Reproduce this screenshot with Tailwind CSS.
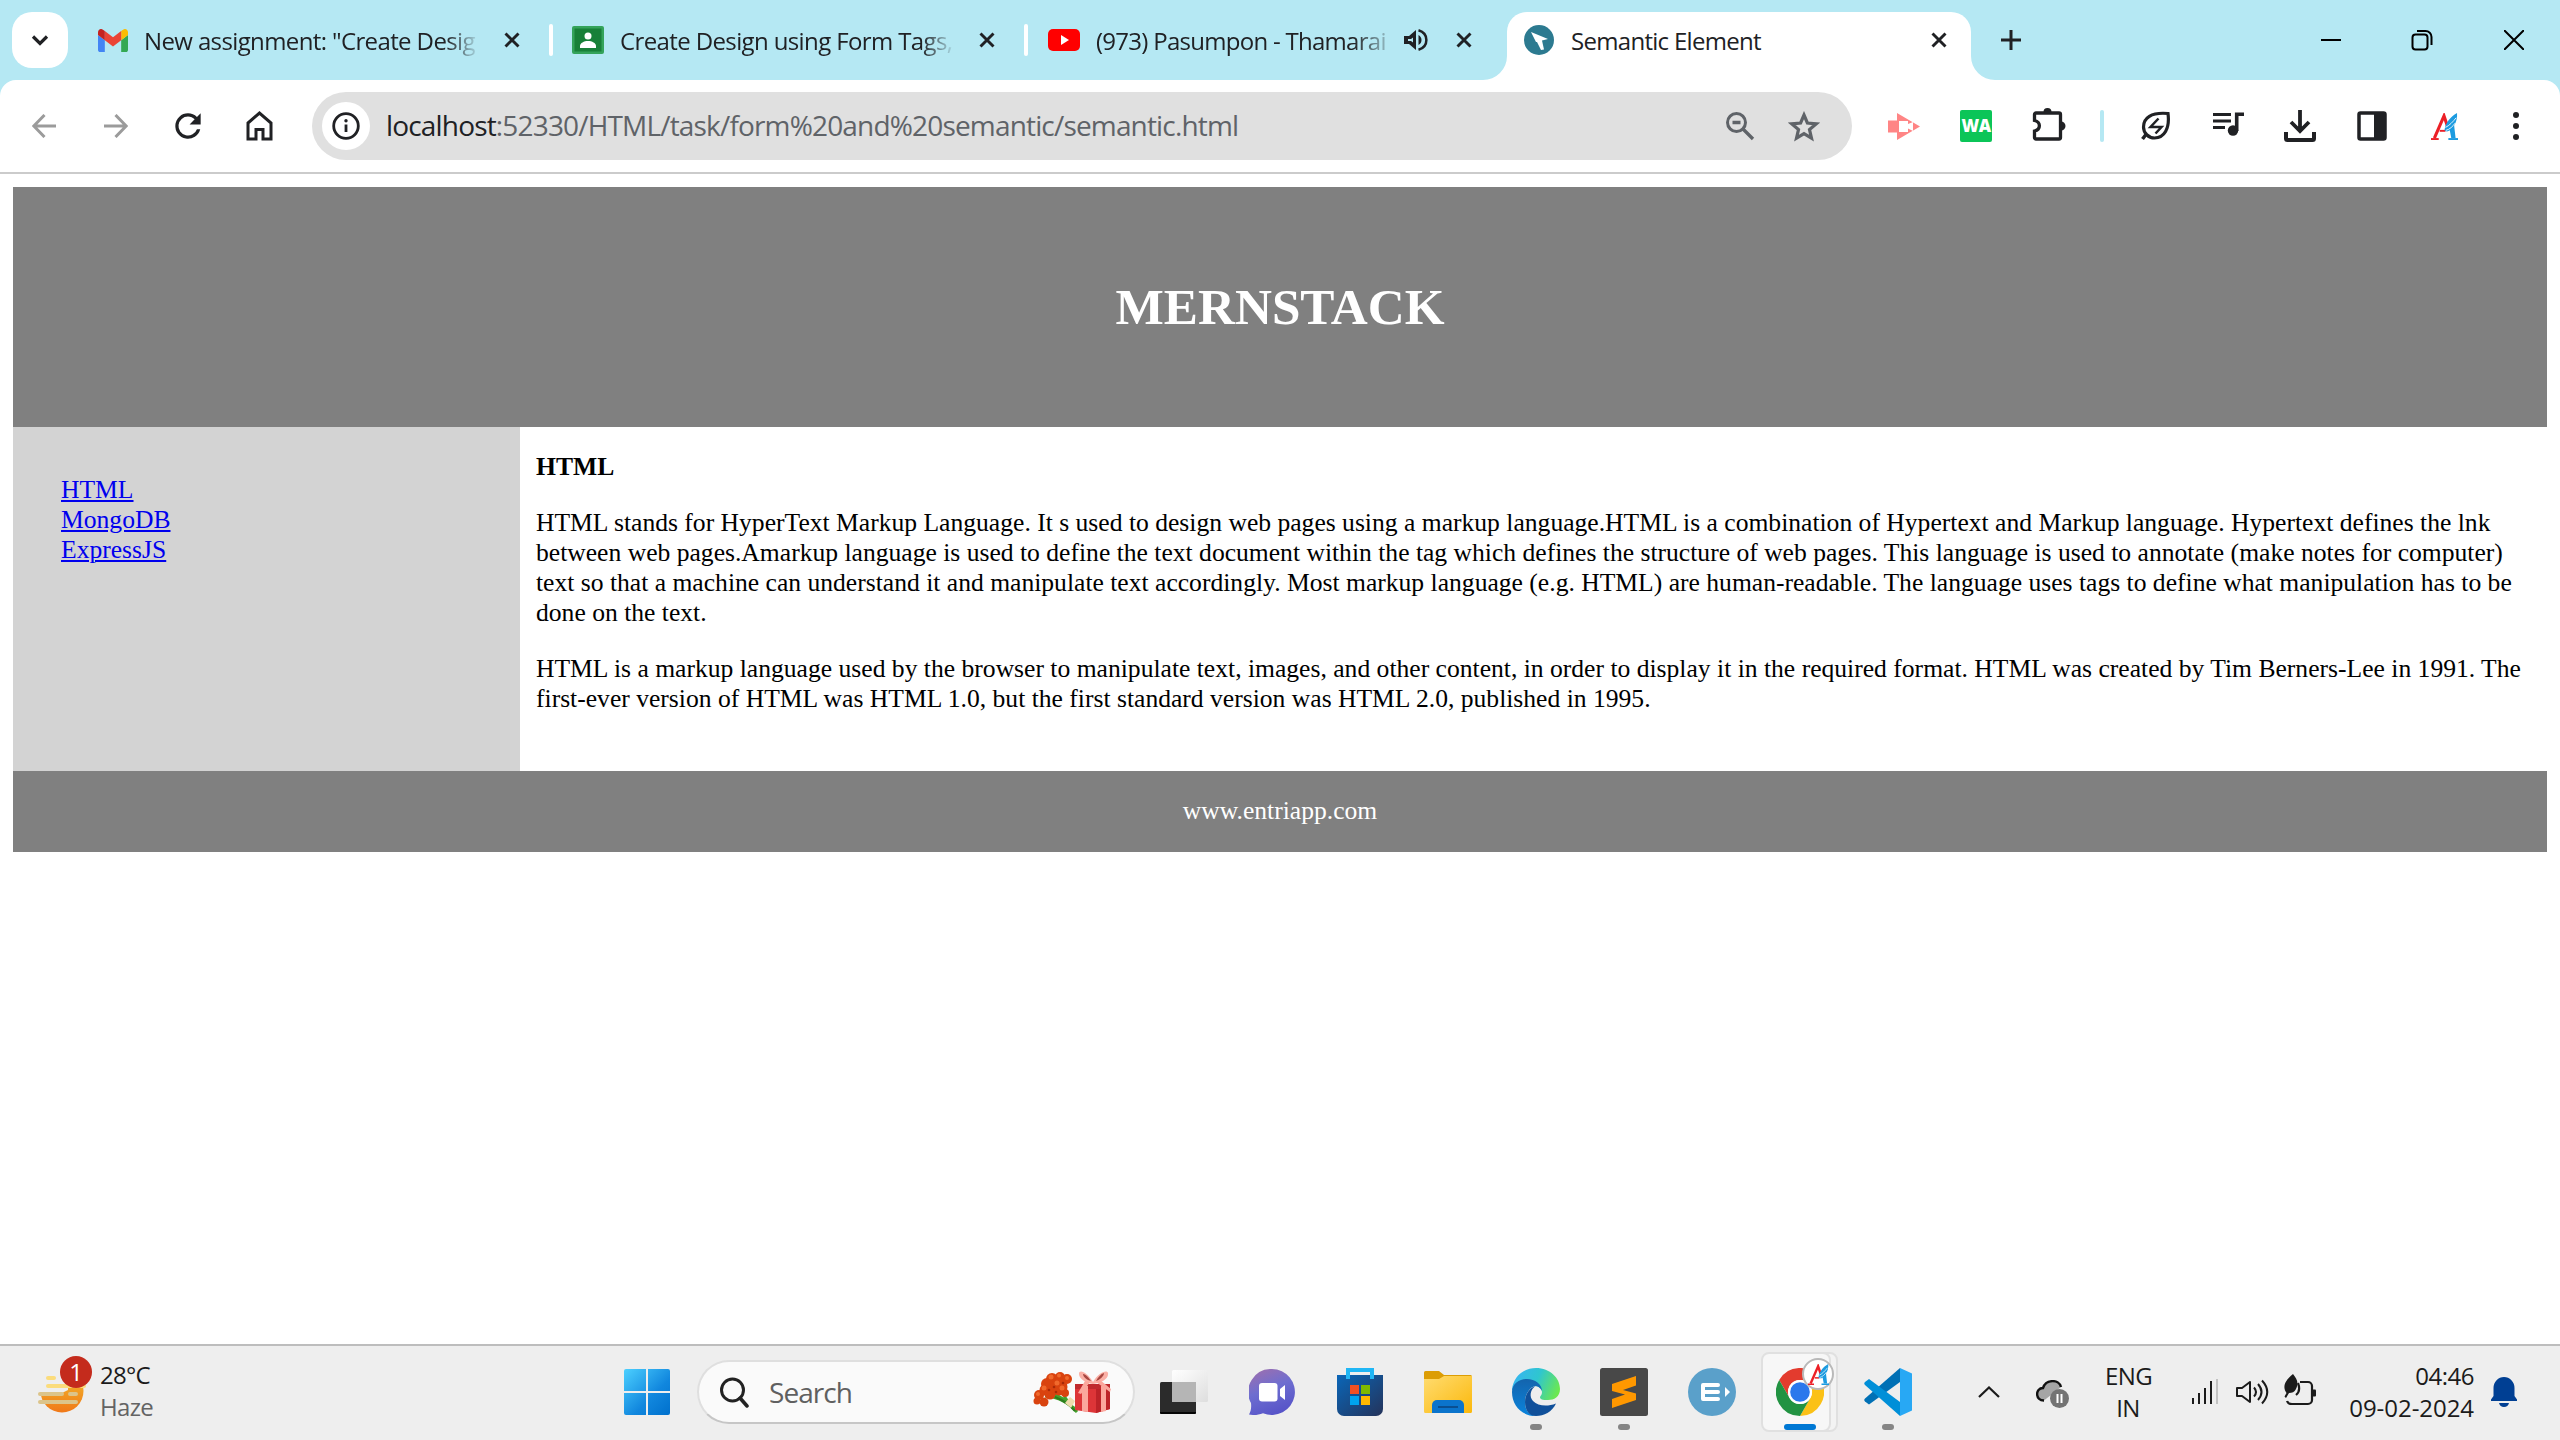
<!DOCTYPE html>
<html lang="en">
<head>
<meta charset="utf-8">
<title>Semantic Element</title>
<script src="https://cdn.jsdelivr.net/npm/@tailwindcss/browser@4"></script>
</head>
<body class="flex h-[1440px] w-[2560px] flex-col overflow-hidden bg-white font-['Open_Sans',sans-serif] text-[#202124]">
<svg class="hidden">
  <symbol id="x" viewBox="0 0 20 20"><path d="M3.500 3.500l13 13M16.500 3.500l-13 13" stroke="#202124" stroke-width="2.900"/></symbol>
  <symbol id="aeon" viewBox="0 0 28 28">
    <path d="M3.500 26L13.500 3l4 12" fill="none" stroke="#ec2027" stroke-width="3.200"/>
    <path d="M9 18.500h6" stroke="#ec2027" stroke-width="2"/>
    <path d="M14 18C15 10 20 4 27 0c.5 5-1 10-3 13l1.500 13h-4.500l-1.500-8c-2 1.500-4 1.500-5.500 0z" fill="#1b9be0"/>
    <path d="M15 15c4-2 8-6 11-10M15.500 18c4-1 7-4 9.500-7.500" stroke="#fff" stroke-width=".9" fill="none"/>
    <path d="M0 27h8" stroke="#ec2027" stroke-width="2"/><path d="M18 27h10" stroke="#1b9be0" stroke-width="2"/>
  </symbol>
</svg>

<!-- tab strip -->
<div class="flex h-20 shrink-0 items-center bg-[#b5e8f3] text-2xl leading-8 tracking-[-0.62px]">
  <div class="ml-3 flex h-14 w-14 items-center justify-center rounded-[20px] bg-white">
    <svg class="h-5 w-5" viewBox="0 0 20 20"><path d="M3 6.500l7 7 7-7" fill="none" stroke="#202124" stroke-width="3.200"/></svg>
  </div>
  <svg class="ml-[30px] h-[23px] w-[30px]" viewBox="52 42 88 66" preserveAspectRatio="none"><path fill="#4285f4" d="M58 108h14V74L52 59v43c0 3.320 2.690 6 6 6"/><path fill="#34a853" d="M120 108h14c3.320 0 6-2.690 6-6V59l-20 15"/><path fill="#fbbc04" d="M120 48v26l20-15v-8c0-7.420-8.470-11.650-14.400-7.200"/><path fill="#ea4335" d="M72 74V48l24 18 24-18v26L96 92"/><path fill="#c5221f" d="M52 51v8l20 15V48l-5.600-4.200c-5.940-4.450-14.400-.22-14.400 7.200"/></svg>
  <div class="ml-4 w-[336px] overflow-hidden pt-0.5 whitespace-nowrap [mask-image:linear-gradient(to_right,black_90%,transparent)]">New assignment: "Create Desig</div>
  <svg class="ml-[22px] h-5 w-5"><use href="#x"/></svg>
  <div class="ml-[27px] h-8 w-1 rounded-full bg-white"></div>
  <svg class="ml-[19px] h-7 w-8" viewBox="0 0 32 28"><rect width="32" height="28" rx="2" fill="#34a35a"/><rect x="2.500" y="2.500" width="27" height="23" fill="#188038"/><circle cx="16" cy="10" r="3.500" fill="#fff"/><path d="M8 22v-2c0-3 4-5 8-5s8 2 8 5v2z" fill="#fff"/></svg>
  <div class="ml-4 w-[335px] overflow-hidden pt-0.5 whitespace-nowrap [mask-image:linear-gradient(to_right,black_90%,transparent)]">Create Design using Form Tags,</div>
  <svg class="ml-[22px] h-5 w-5"><use href="#x"/></svg>
  <div class="ml-[27px] h-8 w-1 rounded-full bg-white"></div>
  <svg class="ml-5 h-[22px] w-8" viewBox="0 0 32 22"><rect width="32" height="22" rx="5" fill="#f00"/><path d="M13 6l8 5-8 5z" fill="#fff"/></svg>
  <div class="ml-4 w-[292px] overflow-hidden pt-0.5 tracking-[-0.72px] whitespace-nowrap [mask-image:linear-gradient(to_right,black_88%,transparent_103%)]">(973) Pasumpon - Thamarai</div>
  <svg class="ml-4 h-6 w-6" viewBox="0 0 24 24"><path d="M0 8v8h5l7 6V2L5 8z" fill="#202124"/><path d="M4 11h3l2-1.500v5L7 13H4z" fill="#b5e8f3"/><path d="M14.500 7c4 2 4 8 0 10z" fill="#202124"/><path d="M14.500 2.200c10.500 3 10.500 16.600 0 19.600" fill="none" stroke="#202124" stroke-width="2.500"/></svg>
  <svg class="ml-[26px] h-5 w-5"><use href="#x"/></svg>
  <div class="relative ml-[33px] flex h-[68px] w-[464px] items-center self-end rounded-t-[20px] bg-white pb-3">
    <svg class="absolute bottom-0 -left-6 h-6 w-6" viewBox="0 0 24 24"><path d="M24 0v24H0A24 24 0 0 0 24 0z" fill="#fff"/></svg>
    <svg class="absolute -right-6 bottom-0 h-6 w-6" viewBox="0 0 24 24"><path d="M0 0v24h24A24 24 0 0 1 0 0z" fill="#fff"/></svg>
    <svg class="ml-[17px] h-[30px] w-[30px]" viewBox="0 0 30 30"><circle cx="15" cy="15" r="15" fill="#2c7a90"/><path d="M7 7l17 7-6 1.500 2 9-3 .5-4-8-1 0z" fill="#fff"/></svg>
    <span class="ml-[17px] pt-0.5 tracking-[-0.7px]">Semantic Element</span>
    <svg class="mr-[22px] ml-auto h-5 w-5"><use href="#x"/></svg>
  </div>
  <svg class="ml-[30px] h-5 w-5" viewBox="0 0 20 20"><path d="M10 0v20M0 10h20" stroke="#202124" stroke-width="3"/></svg>
  <svg class="mr-[70px] ml-auto h-[22px] w-5" viewBox="0 0 20 22"><path d="M0 11h20" stroke="#000" stroke-width="2"/></svg>
  <svg class="mr-[71px] h-[22px] w-[22px]" viewBox="0 0 22 22"><rect x="1.500" y="5.500" width="15" height="15" rx="3" fill="none" stroke="#000" stroke-width="2"/><path d="M6 2h8.500a6 6 0 0 1 6 6v8" fill="none" stroke="#000" stroke-width="2"/></svg>
  <svg class="mr-9 h-5 w-5" viewBox="0 0 20 20"><path d="M0 0l20 20M20 0L0 20" stroke="#000" stroke-width="2"/></svg>
</div>

<!-- toolbar -->
<div class="shrink-0 bg-[#b5e8f3]">
<div class="flex h-[94px] items-center rounded-t-2xl border-b-2 border-[#cbcbcb] bg-white pl-2">
  <div class="flex w-[72px] justify-center"><svg class="h-6 w-6" viewBox="0 0 24 24"><path d="M24 12H2M12.500 1L1.800 12l10.700 11" fill="none" stroke="#9b9b9b" stroke-width="3"/></svg></div>
  <div class="flex w-[72px] justify-center"><svg class="h-6 w-6" viewBox="0 0 24 24"><path d="M0 12h22M11.500 1l10.700 11-10.700 11" fill="none" stroke="#9b9b9b" stroke-width="3"/></svg></div>
  <div class="flex w-[72px] justify-center"><svg class="h-[38px] w-[38px]" viewBox="0 0 24 24"><path d="M17.650 6.350A7.960 7.960 0 0 0 12 4a8 8 0 1 0 7.730 10h-2.080A6 6 0 1 1 12 6c1.660 0 3.140.69 4.220 1.780L13 11h7V4z" fill="#202124"/></svg></div>
  <div class="flex w-[72px] justify-center"><svg class="mr-px h-[30px] w-[27px]" viewBox="0 0 27 30"><path d="M2 12L13.500 2 25 12v16h-8v-9.500h-7V28H2z" fill="none" stroke="#202124" stroke-width="3"/></svg></div>
  <div class="ml-4 flex h-[68px] w-[1540px] items-center rounded-full bg-[#e0e0e0] pl-2.5">
    <div class="flex h-12 w-12 items-center justify-center rounded-full bg-white"><svg class="h-7 w-7" viewBox="0 0 28 28"><circle cx="14" cy="14" r="12.300" fill="none" stroke="#202124" stroke-width="2.800"/><path d="M14 12.500V20" stroke="#202124" stroke-width="2.800"/><circle cx="14" cy="8.800" r="1.700" fill="#202124"/></svg></div>
    <div class="ml-4 pb-0.5 text-[28px] leading-9 tracking-[-0.83px] whitespace-nowrap text-[#5f6368]"><span class="text-[#202124]">localhost</span>:52330/HTML/task/form%20and%20semantic/semantic.html</div>
    <svg class="ml-auto h-[30px] w-[30px]" viewBox="0 0 30 30"><circle cx="11.500" cy="11.500" r="9" fill="none" stroke="#5f6368" stroke-width="3"/><path d="M7.500 11.500h8M18 18l10 10" stroke="#5f6368" stroke-width="3.300" fill="none"/></svg>
    <svg class="mr-8 ml-[33px] h-[31px] w-8" viewBox="0 0 32 31"><path d="M16 4l3.400 8 8.800.8-6.700 5.800 2 8.600L16 22.600l-7.500 4.600 2-8.600-6.700-5.800 8.800-.8z" fill="none" stroke="#5f6368" stroke-width="3.200"/></svg>
  </div>
  <div class="ml-4 flex w-[72px] justify-center"><svg class="h-[27px] w-8" viewBox="0 0 32 27"><path d="M0 7.500h9V0l23 13.500L9 27v-7.500H0z" fill="#ff8585"/><path d="M11 8h9v3l5-2v9l-5-2.500V19h-9z" fill="#fff"/></svg></div>
  <div class="flex w-[72px] justify-center"><div class="flex h-8 w-8 items-center justify-center rounded-xs bg-[#0bc558] pb-px text-[17px] font-extrabold tracking-[-0.5px] text-white">WA</div></div>
  <div class="flex w-[72px] justify-center"><svg class="mb-1 ml-0.5 h-[34px] w-[34px]" viewBox="0 0 34 34"><path d="M4 6h23a1.500 1.500 0 0 1 1.500 1.500v23A1.500 1.500 0 0 1 27 32H4a1.500 1.500 0 0 1-1.500-1.500v-6.500c6.500-1.500 6.500-9 0-10.500V7.500A1.500 1.500 0 0 1 4 6z" fill="none" stroke="#202124" stroke-width="3.300"/><path d="M11.500 5a4 4 0 0 1 8 0zM29 14.500a4.500 4.500 0 0 1 0 9z" fill="#202124"/></svg></div>
  <div class="flex w-9 justify-center"><div class="h-8 w-1 rounded-full bg-[#b5e8f3]"></div></div>
  <div class="flex w-[72px] justify-center"><svg class="h-[30px] w-[30px]" viewBox="0 0 30 30"><path d="M27 2.500C10 1 2.500 7 2.500 16c0 6 5 11 11 11C23 27 29 18 27 2.500z" fill="none" stroke="#202124" stroke-width="3.200"/><path d="M5 23.500L1.500 28" stroke="#202124" stroke-width="3.500"/><path d="M17.500 7.500l-8 8.500h11l-6 6.500" fill="none" stroke="#202124" stroke-width="2.500"/></svg></div>
  <div class="flex w-[72px] justify-center"><svg class="mb-1 ml-0.5 h-6 w-8" viewBox="0 0 32 24"><path d="M0 2.500h18M0 9h18M0 15.500h12" stroke="#202124" stroke-width="3.200"/><circle cx="20" cy="18.500" r="5.200" fill="#202124"/><path d="M23.700 19V2.300H31" fill="none" stroke="#202124" stroke-width="3.600"/></svg></div>
  <div class="flex w-[72px] justify-center"><svg class="h-8 w-8" viewBox="0 0 32 32"><path d="M16 0v21M7 12l9 9 9-9" fill="none" stroke="#202124" stroke-width="3.800"/><path d="M2 22v6.500a1.500 1.500 0 0 0 1.500 1.500h25a1.500 1.500 0 0 0 1.500-1.500V22" fill="none" stroke="#202124" stroke-width="4"/></svg></div>
  <div class="flex w-[72px] justify-center"><svg class="h-[30px] w-[30px]" viewBox="0 0 30 30"><rect x="2" y="2" width="26" height="26" rx="1.500" fill="none" stroke="#202124" stroke-width="3.500"/><path d="M17 2h11v26H17z" fill="#202124"/></svg></div>
  <div class="flex w-[72px] justify-center"><svg class="h-[27px] w-[27px]"><use href="#aeon"/></svg></div>
  <div class="flex w-[72px] flex-col items-center gap-[5px]"><div class="h-1.5 w-1.5 rounded-full bg-[#202124]"></div><div class="h-1.5 w-1.5 rounded-full bg-[#202124]"></div><div class="h-1.5 w-1.5 rounded-full bg-[#202124]"></div></div>
</div>
</div>

<!-- page -->
<main class="flex-1 bg-white px-[13px] pt-[13px] font-['Liberation_Serif',serif] text-[25.6px] leading-[30px] text-black">
  <header class="flex h-60 items-center justify-center bg-[#808080] pb-0.5 text-[51.2px] leading-[59px] font-bold text-white"><h1>MERNSTACK</h1></header>
  <div class="flex h-[344px]">
    <nav class="flex w-[507px] flex-col items-start bg-[#d3d3d3] p-12 text-[#0000ee]">
      <a class="underline decoration-2 underline-offset-2">HTML</a>
      <a class="underline decoration-2 underline-offset-2">MongoDB</a>
      <a class="underline decoration-2 underline-offset-2">ExpressJS</a>
    </nav>
    <section class="flex-1 pt-[25px] pl-4 whitespace-nowrap">
      <h4 class="font-bold">HTML</h4>
      <p class="mt-[25.6px]">HTML stands for HyperText Markup Language. It s used to design web pages using a markup language.HTML is a combination of Hypertext and Markup language. Hypertext defines the lnk<br>between web pages.Amarkup language is used to define the text document within the tag which defines the structure of web pages. This language is used to annotate (make notes for computer)<br>text so that a machine can understand it and manipulate text accordingly. Most markup language (e.g. HTML) are human-readable. The language uses tags to define what manipulation has to be<br>done on the text.</p>
      <p class="mt-[26.4px]">HTML is a markup language used by the browser to manipulate text, images, and other content, in order to display it in the required format. HTML was created by Tim Berners-Lee in 1991. The<br>first-ever version of HTML was HTML 1.0, but the first standard version was HTML 2.0, published in 1995.</p>
    </section>
  </div>
  <footer class="flex h-[81px] items-center justify-center bg-[#808080] pb-0.5 text-white">www.entriapp.com</footer>
</main>

<!-- taskbar -->
<footer class="flex h-24 shrink-0 items-center border-t-2 border-[#bdbdbd] bg-[#eeeeee] pb-0.5 text-2xl leading-8 text-[#1b1b1b]">
  <div class="relative ml-[38px] h-12 w-12">
    <svg class="h-12 w-12" viewBox="0 0 48 48"><defs><linearGradient id="sun" x2="0" y2="1"><stop stop-color="#f2c230"/><stop offset="1" stop-color="#f07818"/></linearGradient></defs><circle cx="24" cy="23" r="21.500" fill="url(#sun)"/><path d="M0 0h30v22l-8 4H0z" fill="#eee"/><g stroke-linecap="round" stroke-width="4"><path d="M10 10h6M10 18h36" stroke="#fbdc7c"/><path d="M2 26h22M32 26h6M2 34h36" stroke="#dcc48a"/></g></svg>
    <div class="absolute -top-3 left-[22px] flex h-8 w-8 items-center justify-center rounded-full bg-[#c42b1c] text-white">1</div>
  </div>
  <div class="mb-0.5 ml-[14px] w-[54px] tracking-[-0.7px]"><div>28°C</div><div class="text-[#636363]">Haze</div></div>
  <svg class="ml-[470px] h-[46px] w-[46px]" viewBox="0 0 46 46"><defs><linearGradient id="win" x2="1" y2="1"><stop stop-color="#4cd0ff"/><stop offset=".6" stop-color="#1187de"/><stop offset="1" stop-color="#0070cc"/></linearGradient></defs><path d="M2 0h20v22H0V2a2 2 0 0 1 2-2zM24 0h20a2 2 0 0 1 2 2v20H24zM0 24h22v22H2a2 2 0 0 1-2-2zM24 24h22v20a2 2 0 0 1-2 2H24z" fill="url(#win)"/></svg>
  <div class="ml-[27px] flex h-16 w-[438px] items-center rounded-full border-2 border-[#dfdfdf] border-b-[#c6c6c6] bg-[#fafafa] text-[28px] tracking-[-0.95px] text-[#606060]">
    <svg class="ml-5 h-8 w-8" viewBox="0 0 32 32"><circle cx="13.500" cy="14" r="11" fill="none" stroke="#222" stroke-width="3"/><path d="M21 22l7 8" stroke="#222" stroke-width="3.500" stroke-linecap="round"/></svg>
    <span class="ml-[18px]">Search</span>
    <!-- bouquet and gift -->
    <svg class="mr-5 ml-auto h-11 w-[80px]" viewBox="0 0 80 44">
      <g fill="none" stroke="#43a12c" stroke-width="3"><path d="M12 26c10 0 18 4 32 14M18 24c10 2 18 8 26 18M30 22c2 8 8 14 14 20"/><path d="M22 27c8 3 14 7 20 14" stroke="#2c7d1f" stroke-width="2"/></g>
      <path d="M32 33l5-6 5 4-4 7z" fill="#efdcae"/>
      <g fill="#d9430f"><circle cx="6" cy="25" r="5"/><circle cx="11" cy="32" r="4.500"/><circle cx="4" cy="31" r="3.500"/><circle cx="12" cy="20" r="5.500"/><circle cx="19" cy="9" r="6"/><circle cx="27" cy="7" r="5"/><circle cx="34" cy="9" r="5"/><circle cx="26" cy="17" r="8.500"/><circle cx="17" cy="24" r="5.500"/><circle cx="32" cy="23" r="4"/><circle cx="14" cy="14" r="6"/></g>
      <g fill="#f0692c"><circle cx="18" cy="7" r="2.500"/><circle cx="26" cy="5.500" r="2"/><circle cx="24" cy="13" r="2.500"/><circle cx="11" cy="18" r="2.500"/><circle cx="5" cy="24" r="2"/><circle cx="29" cy="18" r="2.500"/><circle cx="34" cy="8" r="2"/></g>
      <g fill="#a82a08"><circle cx="21" cy="17" r="1.300"/><circle cx="30" cy="13" r="1.300"/><circle cx="16" cy="20" r="1.300"/><circle cx="23" cy="22" r="1.300"/></g>
      <path d="M42 14h35v25l-14 4-21-3z" fill="#dd3538"/><path d="M63 14h14v25l-14 4z" fill="#bd2328"/><path d="M42 14h35v5H42z" fill="#c02a2e"/>
      <path d="M49 16h6v26l-6-1zM68 16h5v25l-5 1z" fill="#fba79d"/>
      <path d="M60 12C54 2 46-1 46 4c0 5 7 9 14 10 8-1 16-5 15-11-1-4-10 0-15 9z" fill="#fbb0a6"/><path d="M50 4c3 0 6 4 8 7-4-1-8-4-8-7zM71 3c-3 1-6 4-8 8 4-1 8-5 8-8z" fill="#a84640"/>
      <path d="M57 12l-9 12-3-1 7-12zM63 12l14 10 1-3-11-9z" fill="#fba79d"/>
    </svg>
  </div>
  <div class="ml-[5px] flex w-[88px] justify-center"><svg class="h-11 w-12" viewBox="0 0 48 44"><defs><linearGradient id="tv" x2="1" y2="1"><stop stop-color="#fff"/><stop offset="1" stop-color="#dedede"/></linearGradient></defs><rect y="12" width="36" height="32" rx="1.500" fill="#2b2b2b"/><path d="M0 42h36v.5a1.500 1.500 0 0 1-1.500 1.500h-33A1.500 1.500 0 0 1 0 42.500z" fill="#050505"/><rect x="12" width="36" height="32" rx="1.500" fill="url(#tv)"/><path d="M12 12h24v20H12z" fill="#b5b5b5"/></svg></div>
  <div class="flex w-[88px] justify-center"><svg class="h-[46px] w-[46px]" viewBox="0 0 46 46"><defs><linearGradient id="ch" x1=".2" y1="0" x2=".6" y2="1"><stop stop-color="#9b6fb0"/><stop offset=".45" stop-color="#6e6ed0"/><stop offset="1" stop-color="#5653c8"/></linearGradient></defs><path d="M23 0a23 23 0 1 1-9 44.200C9 46 4 46.500 0 45.500c2-3 2.500-7 2-11.500A23 23 0 0 1 23 0z" fill="url(#ch)"/><rect x="10" y="14" width="18.500" height="18.500" rx="3" fill="#fff"/><path d="M31 20l5-4v15l-5-4z" fill="#fff"/></svg></div>
  <div class="flex w-[88px] justify-center"><svg class="h-12 w-[46px]" viewBox="0 0 46 48"><defs><linearGradient id="st" x2="1" y2="1"><stop stop-color="#0a66b8"/><stop offset="1" stop-color="#24335a"/></linearGradient></defs><path d="M0 7h46v34a7 7 0 0 1-7 7H7a7 7 0 0 1-7-7z" fill="url(#st)"/><path d="M11 11V2h24v9" fill="none" stroke="#1fb6f5" stroke-width="4"/><path d="M13 17h9v9h-9z" fill="#f25022"/><path d="M24 17h9v9h-9z" fill="#7fba00"/><path d="M13 28h9v9h-9z" fill="#00a4ef"/><path d="M24 28h9v9h-9z" fill="#ffb900"/></svg></div>
  <div class="flex w-[88px] justify-center"><svg class="h-[42px] w-12" viewBox="0 0 48 42"><defs><linearGradient id="fo" x2="1" y2="1"><stop stop-color="#ffdc70"/><stop offset="1" stop-color="#fbb80c"/></linearGradient></defs><path d="M0 1.500A1.500 1.500 0 0 1 1.500 0H15l5 4h26.500A1.500 1.500 0 0 1 48 5.500V10H0z" fill="#dc9d04"/><path d="M0 8h15l5-3h28v35.500a1.500 1.500 0 0 1-1.500 1.500h-45A1.500 1.500 0 0 1 0 40.500z" fill="url(#fo)"/><path d="M8 42V34a5 5 0 0 1 5-5h22a5 5 0 0 1 5 5v8z" fill="#0b74cc"/><path d="M14 36h20" stroke="#0a4f91" stroke-width="2"/></svg></div>
  <div class="relative flex w-[88px] justify-center"><svg class="h-12 w-12" viewBox="0 0 48 48"><defs><linearGradient id="e1" x1="0" y1=".3" x2="1" y2=".6"><stop stop-color="#37b5f2"/><stop offset=".5" stop-color="#2fc6cf"/><stop offset="1" stop-color="#6ce84f"/></linearGradient><linearGradient id="e2" x2="0" y2="1"><stop stop-color="#1464ad"/><stop offset="1" stop-color="#0a84dc"/></linearGradient></defs><path d="M0 22C1 9 11 0 24 0c14 0 24 10 24 21 0 8-6 11-12 11-7 0-9-1.500-7.500-4C32 24 29 18 23 18L10 20z" fill="url(#e1)"/><path d="M0 24c0-9 8-13 15-13 8 0 15 5 15 12-2-4-5-5-7-5-5 1-10 8-10 16s4 13 11 14C10 48 0 38 0 24z" fill="url(#e2)"/><path d="M13 34c0-8 5-15 11-16-6 3-7 11-3 15 5 5 14 6 23 2.500C40 44 32 48 24 48c-7 0-11-6-11-14z" fill="#10509a"/></svg><div class="absolute top-[56px] h-1.5 w-3 rounded-full bg-[#858585]"></div></div>
  <div class="relative flex w-[88px] justify-center"><svg class="h-12 w-12" viewBox="0 0 48 48"><rect width="48" height="48" rx="2.500" fill="#484848"/><path d="M12 16l24-8v9.500L23 22l13 3.500V32l-24 8v-9l13-4.500L12 23z" fill="#ff9800"/></svg><div class="absolute top-[56px] h-1.5 w-3 rounded-full bg-[#858585]"></div></div>
  <div class="flex w-[88px] justify-center"><svg class="h-12 w-12" viewBox="0 0 48 48"><circle cx="24" cy="24" r="24" fill="#5aa0ca"/><path d="M30 17H15v14h15M15 24h15" fill="none" stroke="#fff" stroke-width="4" stroke-linecap="round" stroke-linejoin="round"/><path d="M37 19l5 5-5 5z" fill="#fff"/></svg></div>
  <div class="relative flex w-[88px] justify-center">
    <div class="absolute -top-4 left-[18px] h-20 w-16 rounded-lg border-2 border-[#e0e0e0] bg-[#f3f3f3]"></div>
    <div class="absolute -top-4 left-[5px] h-20 w-[70px] rounded-lg border-2 border-[#e0e0e0] bg-[#f7f7f7]"></div>
    <svg class="relative h-12 w-12" viewBox="0 0 48 48"><path d="M3.200 12A24 24 0 0 1 44.800 12H24a12 12 0 0 0-10.400 18z" fill="#e33b2e"/><path d="M44.800 12A24 24 0 0 1 24 48l10.400-18A12 12 0 0 0 24 12z" fill="#fbc116"/><path d="M24 48A24 24 0 0 1 3.200 12l10.400 18a12 12 0 0 0 20.800 0z" fill="#229342"/><circle cx="24" cy="24" r="12" fill="#fff"/><circle cx="24" cy="24" r="9.800" fill="#2b78ec"/></svg>
    <div class="absolute -top-[10px] left-[46px] flex h-8 w-8 items-center justify-center rounded-full border-2 border-[#b9b9b9] bg-white"><svg class="h-[21px] w-[21px]"><use href="#aeon"/></svg></div>
    <div class="absolute top-[56px] h-1.5 w-8 rounded-full bg-[#0078d4]"></div>
  </div>
  <div class="relative flex w-[88px] justify-center"><svg class="h-12 w-12" viewBox="0 0 48 48"><path d="M36 0v14L5 36.500l-4-3q-1.500-1.500 0-3z" fill="#0070b5"/><path d="M36 48V34L5 11 1 14q-1.500 1.500 0 3z" fill="#008fd8"/><path d="M36 0l12 5.500v37L36 48z" fill="#28a8f4"/></svg><div class="absolute top-[56px] h-1.5 w-3 rounded-full bg-[#858585]"></div></div>

  <!-- tray -->
  <svg class="ml-[46px] h-3 w-[22px]" viewBox="0 0 22 12"><path d="M1 11L11 1.500 21 11" fill="none" stroke="#1b1b1b" stroke-width="2.200"/></svg>
  <svg class="mt-1 ml-[36px] h-7 w-[34px]" viewBox="0 0 34 28"><path d="M8 20.500C-1 20.500-1 8 7 8 10-1 23-1 25 7" fill="#a5a5a5" stroke="#111" stroke-width="2.400"/><circle cx="23.500" cy="18.500" r="9.500" fill="#737373"/><path d="M21.500 14v9M25.500 14v9" stroke="#fff" stroke-width="2"/></svg>
  <div class="ml-[35px] w-[46px] text-center tracking-[-0.6px]"><div>ENG</div><div>IN</div></div>
  <svg class="ml-[41px] h-7 w-[26px]" viewBox="0 0 26 28"><path d="M1 28v-6M7 28v-11M13 28v-16M19 28V5" stroke="#1b1b1b" stroke-width="2" transform="translate(0 -2)"/><path d="M25 26V1" stroke="#c2c2c2" stroke-width="2"/></svg>
  <svg class="ml-[18px] h-[26px] w-[33px]" viewBox="0 0 33 26"><path d="M1 9v8h5l8 6V3L6 9z" fill="none" stroke="#1b1b1b" stroke-width="2" stroke-linejoin="round"/><path d="M18 8.500q4 4.500 0 9M22 5q7 8 0 16M26 1.500q10.500 11.500 0 23" fill="none" stroke="#1b1b1b" stroke-width="2"/></svg>
  <svg class="mb-1 ml-[15px] h-8 w-8" viewBox="0 0 32 32"><path d="M9 0c4 5 6 9 3 15-1.500 3-4 4-7 4l-3 5-1.500-1.500 2-3.500C-1 14-1 8 9 0z" fill="#1b1b1b"/><path d="M16 8h8a4 4 0 0 1 4 4v14a4 4 0 0 1-4 4H8q-4 0-5-3M12 21q5-4 2-12" fill="none" stroke="#1b1b1b" stroke-width="2.200"/><rect x="28" y="15.500" width="4" height="7" rx="1" fill="#1b1b1b"/></svg>
  <div class="mr-[17px] mb-px ml-auto text-right"><div class="tracking-[-0.5px]">04:46</div><div class="tracking-[-0.05px]">09-02-2024</div></div>
  <svg class="mr-[43px] h-[30px] w-[26px]" viewBox="0 0 26 30"><path d="M2.500 11a10.500 11 0 0 1 21 0v8l2.500 3.500V24H0v-1.500L2.500 19zM8 26h10q-1 4-5 4t-5-4z" fill="#003f93"/></svg>
</footer>
</body>
</html>
